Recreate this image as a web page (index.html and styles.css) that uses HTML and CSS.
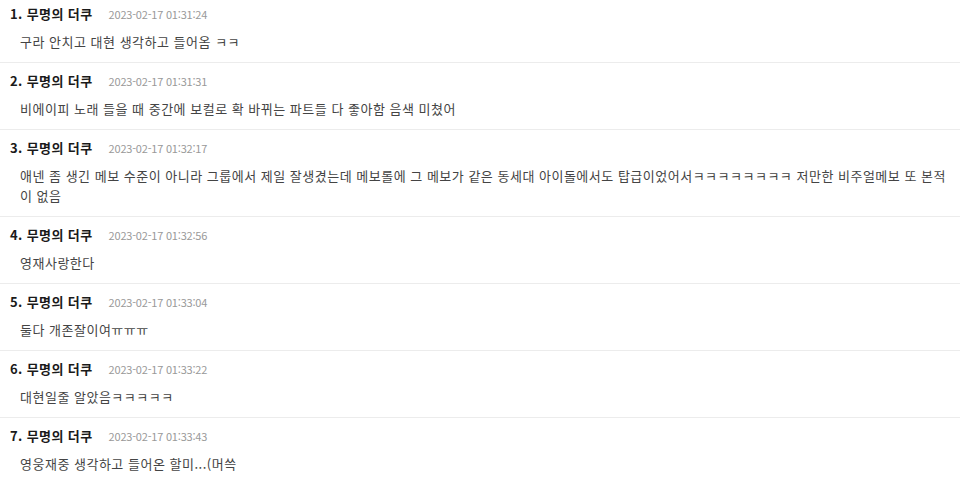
FILE: index.html
```html
<!DOCTYPE html>
<html lang="ko">
<head>
<meta charset="utf-8">
<link rel="stylesheet" href="styles.css">
</head>
<body>
<ul class="comments">
  <li class="comment first">
    <div class="meta"><span class="name">1. 무명의 더쿠</span><span class="date">2023-02-17 01:31:24</span></div>
    <p class="text">구라 안치고 대현 생각하고 들어옴 ㅋㅋ</p>
  </li>
  <li class="comment">
    <div class="meta"><span class="name">2. 무명의 더쿠</span><span class="date">2023-02-17 01:31:31</span></div>
    <p class="text">비에이피 노래 들을 때 중간에 보컬로 확 바뀌는 파트들 다 좋아함 음색 미쳤어</p>
  </li>
  <li class="comment">
    <div class="meta"><span class="name">3. 무명의 더쿠</span><span class="date">2023-02-17 01:32:17</span></div>
    <p class="text">애넨 좀 생긴 메보 수준이 아니라 그룹에서 제일 잘생겼는데 메보롤에 그 메보가 같은 동세대 아이돌에서도 탑급이었어서ㅋㅋㅋㅋㅋㅋㅋㅋ 저만한 비주얼메보 또 본적 이 없음</p>
  </li>
  <li class="comment">
    <div class="meta"><span class="name">4. 무명의 더쿠</span><span class="date">2023-02-17 01:32:56</span></div>
    <p class="text">영재사랑한다</p>
  </li>
  <li class="comment">
    <div class="meta"><span class="name">5. 무명의 더쿠</span><span class="date">2023-02-17 01:33:04</span></div>
    <p class="text">둘다 개존잘이여ㅠㅠㅠ</p>
  </li>
  <li class="comment">
    <div class="meta"><span class="name">6. 무명의 더쿠</span><span class="date">2023-02-17 01:33:22</span></div>
    <p class="text">대현일줄 알았음ㅋㅋㅋㅋㅋ</p>
  </li>
  <li class="comment">
    <div class="meta"><span class="name">7. 무명의 더쿠</span><span class="date">2023-02-17 01:33:43</span></div>
    <p class="text">영웅재중 생각하고 들어온 할미...(머쓱</p>
  </li>
</ul>
</body>
</html>
```
FILE: styles.css
```css
html, body {
  margin: 0;
  padding: 0;
  background: #fff;
}
body {
  font-family: "Noto Sans CJK KR", "Noto Sans", sans-serif;
  color: #333;
}
.comments {
  list-style: none;
  margin: 0;
  padding: 0;
}
.comment {
  padding: 9px 10px 10px 10px;
  border-bottom: 1px solid #ececec;
}
.comment.first {
  padding-top: 5px;
}
.meta {
  display: flex;
  align-items: baseline;
  gap: 16px;
  height: 18px;
  line-height: 18px;
}
.name {
  font-size: 13px;
  font-weight: 700;
  color: #1a1a1a;
  letter-spacing: 0.4px;
}
.date {
  font-size: 11px;
  color: #999;
  letter-spacing: -0.2px;
}
.text {
  margin: 9px 0 0 10px;
  font-size: 13px;
  line-height: 20px;
  letter-spacing: 0.5px;
  color: #444;
  word-break: keep-all;
}
```
